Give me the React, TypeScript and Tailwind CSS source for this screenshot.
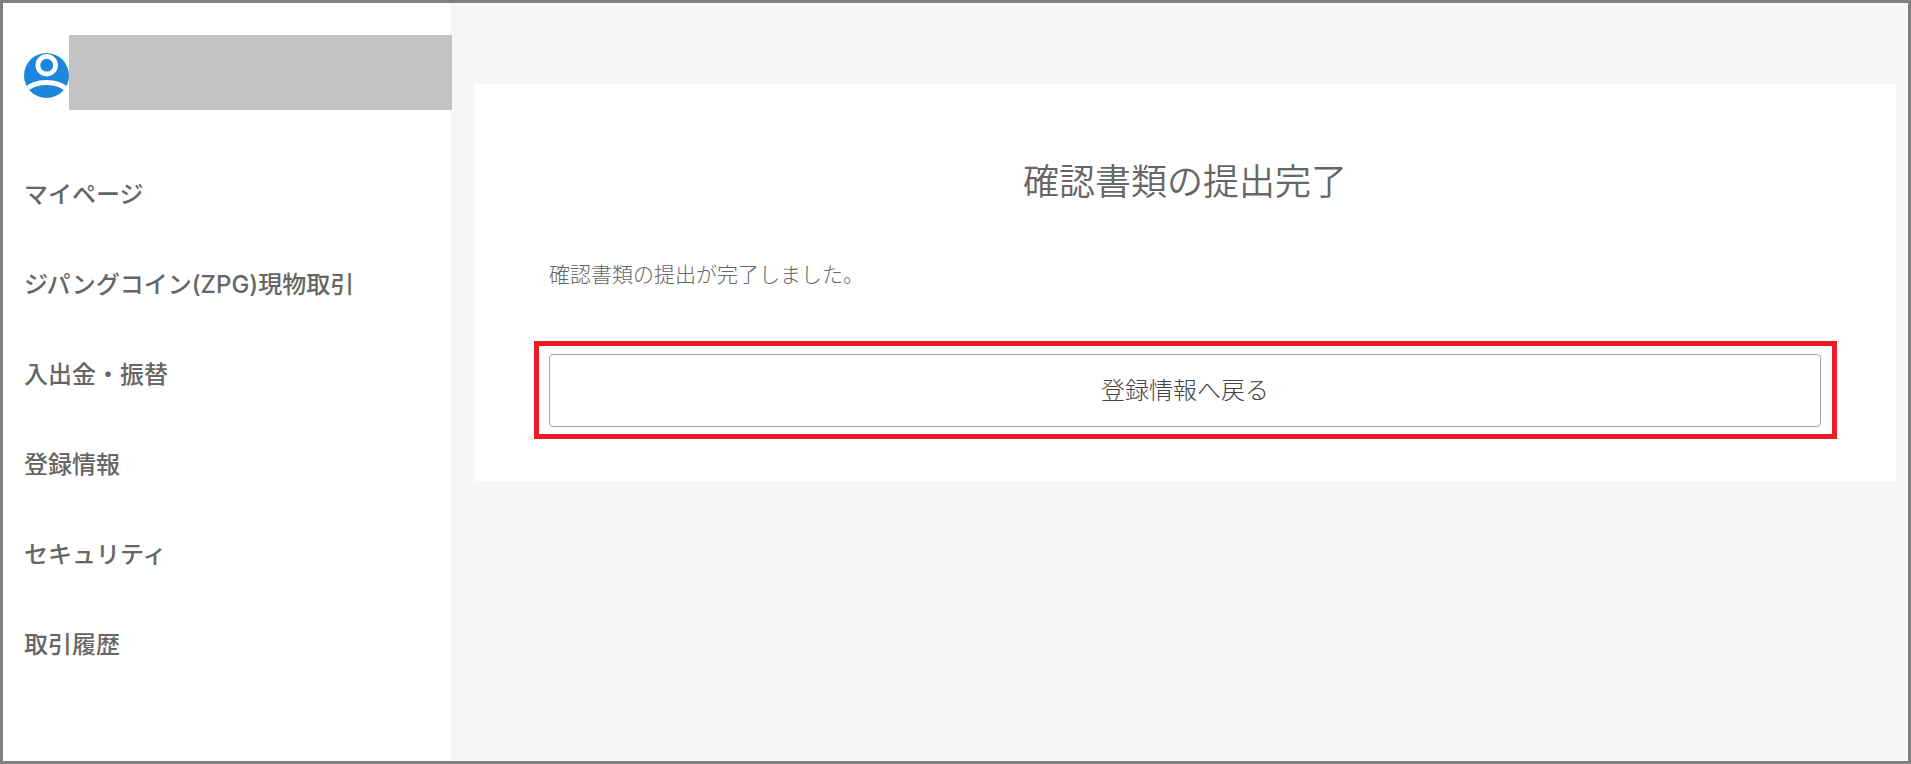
import clsx from "clsx";

const menuItems = [
  { label: "マイページ", href: "#mypage" },
  { label: "ジパングコイン(ZPG)現物取引", href: "#trade" },
  { label: "入出金・振替", href: "#transfer" },
  { label: "登録情報", href: "#profile" },
  { label: "セキュリティ", href: "#security" },
  { label: "取引履歴", href: "#history" },
];

const UserIcon = ({ className }: { className?: string }) => (
  <svg viewBox="0 0 45 45" className={clsx("shrink-0", className)} aria-hidden="true">
    <defs>
      <clipPath id="user-icon-circle">
        <circle cx="22.5" cy="22.5" r="22.5" />
      </clipPath>
    </defs>
    <g clipPath="url(#user-icon-circle)">
      <rect width="45" height="45" fill="#1c86dd" />
      <circle cx="22.7" cy="12.2" r="8.8" fill="none" stroke="#fff" strokeWidth="4.8" />
      <path d="M0 38.5C6 31.5 13 29.5 22.5 29.5S39 31.5 45 38.5" fill="none" stroke="#fff" strokeWidth="5" />
    </g>
  </svg>
);

const Sidebar = () => {
  return (
    <aside className="w-[447px] shrink-0 bg-white pt-8">
      {/* User */}
      <div className="flex h-[75px] pl-[21px]">
        <UserIcon className="mt-[18px] size-[45px]" />
        <div className="relative z-10 -mr-0.5 h-full flex-1 bg-[#c3c3c3]" />
      </div>

      {/* Menu */}
      <nav className="mt-10">
        <ul>
          {menuItems.map((item) => (
            <li key={item.href}>
              <a
                href={item.href}
                className="flex h-[90px] items-center pl-[21px] text-2xl font-medium text-[#666]">
                {item.label}
              </a>
            </li>
          ))}
        </ul>
      </nav>
    </aside>
  );
};

const App = () => {
  return (
    <div className="flex min-h-screen border-3 border-[#808080] bg-[#f6f6f6] font-['Inter','Noto_Sans_CJK_JP',sans-serif] text-[#666]">
      <Sidebar />

      <main className="min-w-0 flex-1 pt-[81px] pr-3 pl-6">
        <section className="bg-white px-[75px] pt-[71px] pb-[54px]">
          <h1 className="text-center text-4xl leading-[54px] font-[350]">確認書類の提出完了</h1>
          <p className="mt-[50px] text-[21px] leading-8 font-light">
            確認書類の提出が完了しました。
          </p>

          <div className="relative mt-[63px]">
            <button
              type="button"
              className="h-[73px] w-full rounded border border-[#a6a6a6] text-2xl font-light text-[#444]">
              登録情報へ戻る
            </button>
            {/* Highlight frame */}
            <div className="pointer-events-none absolute -top-[13px] -right-4 -bottom-3 -left-[15px] border-5 border-[#ed1c24]" />
          </div>
        </section>
      </main>
    </div>
  );
};

export default App;
